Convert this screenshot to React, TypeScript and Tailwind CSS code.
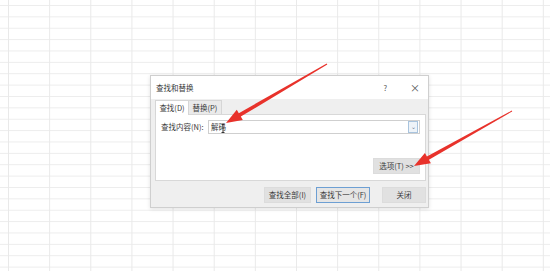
import React from "react";

const ui = "font-['Microsoft_YaHei','Noto_Sans_CJK_SC',sans-serif] text-[7.5px] leading-none text-[#3a3a3a]";

function Arrows() {
  return (
    <svg className="pointer-events-none absolute inset-0" width="550" height="271" viewBox="0 0 550 271">
      {/* arrow to the search field */}
      <polygon
        fill="#e8322b"
        points="327.3,64.4 240.8,116.6 242.8,120.1 226,123 236.8,109.7 238.8,113.2 326.7,63.6"
      />
      {/* arrow to the options button */}
      <polygon
        fill="#e8322b"
        points="512.2,111.4 428.9,159.8 430.9,163.3 414,166 424.9,152.9 426.9,156.4 511.8,110.6"
      />
      {/* text cursor */}
      <path d="M221.5 124.5h3M223 124.5v8M221.5 132.5h3" stroke="#222" strokeWidth="0.9" fill="none" />
    </svg>
  );
}

function Button({ label, primary = false, className = "" }: { label: string; primary?: boolean; className?: string }) {
  return (
    <div
      className={`flex h-[16px] items-center justify-center border ${
        primary ? "border-[#6d9fd3] bg-[#e5e5e5]" : "border-[#dcdcdc] bg-[#e1e1e1]"
      } ${className}`}
    >
      {label}
    </div>
  );
}

export default function App() {
  return (
    <div className="relative h-[271px] w-[550px] overflow-hidden bg-white bg-[linear-gradient(to_right,#e9e9e9_1px,transparent_1px),linear-gradient(to_bottom,#ececec_1px,transparent_1px)] bg-[length:41.15px_11.39px] bg-[position:8px_5px]">
      {/* dialog */}
      <div className={`absolute left-[150px] top-[75px] flex h-[133px] w-[279px] flex-col border border-[#cfcfcf] bg-[#efefef] shadow-[0_1px_4px_rgba(0,0,0,0.12)] ${ui}`}>
        {/* title bar */}
        <div className="flex h-[23px] items-center bg-white pl-[5px] pr-[8px]">
          <span>查找和替换</span>
          <span className="ml-auto mr-[23px] text-[#555]">?</span>
          <span className="text-[10px] text-[#555]">×</span>
        </div>

        {/* body */}
        <div className="flex flex-1 flex-col pl-[4px] pr-[2px]">
          {/* tabs */}
          <div className="flex h-[15px] items-end">
            <div className="relative top-[1px] flex h-[15px] w-[34px] items-center justify-center border border-b-0 border-[#d6d6d6] bg-white">
              查找(D)
            </div>
            <div className="flex h-[14px] w-[33px] items-center justify-center border border-l-0 border-b-0 border-[#d6d6d6] bg-[#eaeaea]">
              替换(P)
            </div>
          </div>

          {/* panel */}
          <div className="flex h-[67px] flex-col border border-[#d8d8d8] bg-white pl-[5px] pr-[5px] pt-[5px]">
            <div className="flex h-[14px] items-center">
              <span className="w-[47px]">查找内容(N):</span>
              <div className="flex h-[14px] flex-1 items-center border border-[#cfcfcf] pl-[2px]">
                <span>解码</span>
                <div className="ml-auto mr-[1px] flex h-[12px] w-[10px] items-center justify-center border border-[#a9c4de] bg-[#eef3f8] text-[6px] text-[#6a7f95]">
                  ⌄
                </div>
              </div>
            </div>
            <Button label="选项(T) >>" className="mb-[6px] mt-auto w-[47px] self-end" />
          </div>

          {/* footer buttons */}
          <div className="flex flex-1 items-start justify-end pt-[6px]">
            <Button label="查找全部(I)" className="w-[47px]" />
            <Button label="查找下一个(F)" primary className="ml-[5px] w-[54px]" />
            <Button label="关闭" className="ml-[12px] w-[44px]" />
          </div>
        </div>
      </div>

      <Arrows />
    </div>
  );
}
